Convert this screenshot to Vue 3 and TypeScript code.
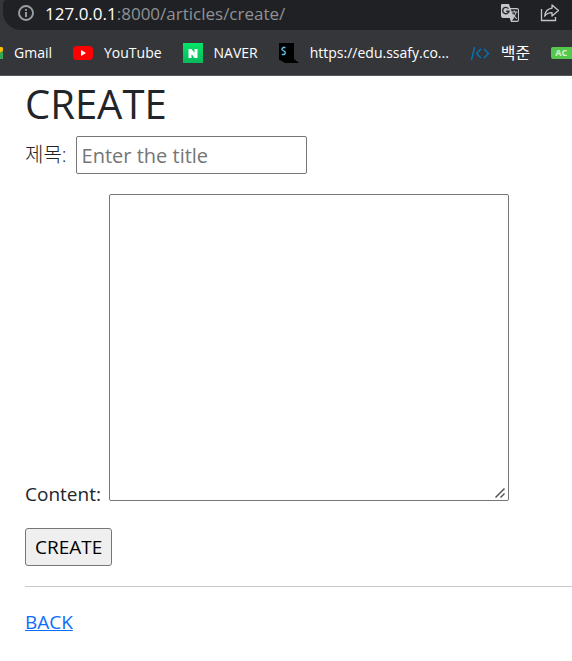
<script setup lang="ts">
import { ref } from 'vue'

const title = ref('')
const content = ref('')
</script>

<template>
  <header class="browser">
    <div class="address">
      <svg class="info" viewBox="0 0 18 18" aria-hidden="true">
        <circle cx="9" cy="9" r="7" fill="none" stroke="#9aa0a6" stroke-width="1.9" />
        <path d="M9 8v5M9 5v1.8" stroke="#9aa0a6" stroke-width="1.9" />
      </svg>
      <div class="url"><span class="host">127.0.0.1</span>:8000/articles/create/</div>
      <button class="tool" type="button" aria-label="Translate">
        <svg viewBox="0 0 20 20" aria-hidden="true">
          <path d="M2 1h7l1.3 4H17a2 2 0 0 1 2 2v10a2 2 0 0 1-2 2h-6l-1.3-4H3a2 2 0 0 1-2-2V2a1 1 0 0 1 1-1z" fill="#c4c6c8" />
          <path d="M10.8 6.2H17a1 1 0 0 1 1 1v9.6a1 1 0 0 1-1 1h-5l2-2.8z" fill="#292a2d" />
          <path d="M8.4 5.6A3.2 3.2 0 1 0 9 8.2H6.2" fill="none" stroke="#292a2d" stroke-width="1.4" />
          <path d="M11.5 9h6M14.3 7.6V9M16.3 9c-.5 2.3-1.8 4-3.7 5M12.6 10.8c.8 1.8 2.2 3.4 4.2 4.8" fill="none" stroke="#c4c6c8" stroke-width="1.1" />
        </svg>
      </button>
      <button class="tool" type="button" aria-label="Share">
        <svg viewBox="0 0 20 20" aria-hidden="true">
          <path d="M1.500 6v11.500h14V14" fill="none" stroke="#c4c6c8" stroke-width="1.3" />
          <path d="M12 2l6.500 5.500L12 13v-3.300c-3.200 0-5.600 1-7.300 3.500C5.200 8.600 7.600 5.800 12 5.200z" fill="none" stroke="#c4c6c8" stroke-width="1.3" stroke-linejoin="round" />
        </svg>
      </button>
    </div>
    <nav class="bookmarks">
      <a class="gmail" href="#">
        <svg class="gmail-icon" viewBox="0 0 3 14" aria-hidden="true">
          <path d="M0 1h2l1 1v3L0 7z" fill="#fbbc04" />
          <path d="M0 7l3-2v8H0z" fill="#34a853" />
        </svg>
        Gmail
      </a>
      <a class="youtube" href="#">
        <svg viewBox="0 0 20 20" aria-hidden="true">
          <rect y="3" width="20" height="14" rx="4" fill="#f00" />
          <path d="M8 7l5 3-5 3z" fill="#fff" />
        </svg>
        YouTube
      </a>
      <a class="naver" href="#">
        <svg viewBox="0 0 20 20" aria-hidden="true">
          <defs>
            <linearGradient id="naver-green" x2="0" y2="1">
              <stop stop-color="#04e567" />
              <stop offset="1" stop-color="#08b95c" />
            </linearGradient>
          </defs>
          <path d="M0 0h20v20H0z" fill="url(#naver-green)" />
          <path d="M5.500 6h3l3 4V6h3v9h-3l-3-4v4h-3z" fill="#fff" />
        </svg>
        NAVER
      </a>
      <a class="ssafy" href="#">
        <svg viewBox="0 0 20 20" aria-hidden="true">
          <path d="M0 0h15v16l5 4H6l-5-3H0z" fill="#000" />
          <path d="M6.500 4.500H4.200L3 5.700v1L6.200 9v1.500L5.200 11.500H2.800" fill="none" stroke="#62c6ed" stroke-width="1.3" />
        </svg>
        https://edu.ssafy.co...
      </a>
      <a class="boj" href="#">
        <svg viewBox="0 0 20 20" aria-hidden="true">
          <path d="M4.500 4L1.500 17M11 6l-4.500 4.500L11 15M14 6l4.500 4.500L14 15" fill="none" stroke="#0873b5" stroke-width="1.4" />
        </svg>
        백준
      </a>
      <a class="solved" href="#" aria-label="solved.ac"><span>AC</span></a>
    </nav>
  </header>

  <main>
    <h1>CREATE</h1>
    <form @submit.prevent>
      <div class="title-field">
        <label for="title">제목:</label>
        <input id="title" v-model="title" type="text" placeholder="Enter the title">
      </div>
      <div class="content-field">
        <label for="content">Content:</label>
        <textarea id="content" v-model="content"></textarea>
      </div>
      <button class="submit" type="submit">CREATE</button>
    </form>
    <hr>
    <a class="back" href="#">BACK</a>
  </main>
</template>

<style>
body {
  margin: 0;
  overflow-x: hidden;
  background: #fff;
}
</style>

<style scoped>
* {
  box-sizing: border-box;
}

.browser,
main {
  font-family: "Open Sans", "Noto Sans CJK KR", sans-serif;
}

.browser {
  height: 76px;
  overflow: hidden;
  border-bottom: 1px solid #56575b;
  background: #35363a;
}

.address {
  display: flex;
  align-items: center;
  height: 30px;
  margin-left: 3px;
  padding: 0 12px 4px 14px;
  border-radius: 4px 0 0 18px;
  background: #202124;
  color: #8f9296;
  font-size: 17px;
}

.info {
  width: 18px;
  height: 18px;
  margin-right: 10px;
}

.url {
  flex: 1;
  white-space: nowrap;
}

.host {
  color: #fff;
}

.tool {
  width: 20px;
  height: 20px;
  margin-left: 20px;
  padding: 0;
  border: 0;
  background: none;
}

.tool svg {
  display: block;
  width: 20px;
  height: 20px;
}

.bookmarks {
  display: flex;
  align-items: center;
  gap: 21px;
  height: 45px;
  color: #fff;
  font-size: 14px;
}

.bookmarks a {
  display: flex;
  flex: none;
  align-items: center;
  gap: 11px;
  color: inherit;
  text-decoration: none;
  white-space: nowrap;
}

.bookmarks svg {
  width: 20px;
  height: 20px;
}

.bookmarks .gmail-icon {
  width: 3px;
  height: 14px;
}

.bookmarks .boj {
  font-size: 16px;
  line-height: 20px;
}

.solved span {
  width: 24px;
  padding: 0 4px;
  border-radius: 2px;
  background: #55c74d;
  color: #d5f2d2;
  font-size: 9px;
  font-weight: 700;
  line-height: 12px;
}

main {
  padding: 4px 0 24px 25px;
  color: #212529;
  font-size: 19px;
  line-height: 30px;
}

h1 {
  margin: 0 0 8px;
  font-size: 40px;
  font-weight: 400;
  line-height: 48px;
}

.title-field {
  display: flex;
  align-items: center;
  gap: 9px;
  margin-bottom: 20px;
}

.title-field label {
  font-size: 20px;
  font-weight: 300;
}

.content-field {
  margin-bottom: 19px;
  white-space: nowrap;
}

.content-field label {
  margin-right: 3px;
}

.content-field textarea {
  margin-left: 5px;
}

input,
textarea {
  border: 1px solid #767676;
  border-radius: 2px;
  background: #fff;
  color: #212529;
  font: inherit;
}

input {
  width: 231px;
  height: 38px;
  padding: 1px 5px;
  font-size: 20px;
}

input::placeholder {
  color: #757575;
}

textarea {
  width: 400px;
  height: 307px;
  padding: 2px 5px;
}

textarea::-webkit-resizer {
  background: url("data:image/svg+xml,%3Csvg xmlns='http://www.w3.org/2000/svg' width='15' height='15'%3E%3Cpath d='M2.500 12.500l9-9M7.500 12.500l4-4' stroke='%23555' stroke-width='1.5'/%3E%3C/svg%3E") no-repeat;
}

.submit {
  display: block;
  height: 38px;
  padding: 0 9px;
  border: 1px solid #767676;
  border-radius: 3px;
  background: #efefef;
  color: #000;
  font: inherit;
}

hr {
  margin: 20px 0;
  border: 0;
  border-top: 1px solid #c8c9ca;
}

.back {
  color: #0d6efd;
}
</style>
